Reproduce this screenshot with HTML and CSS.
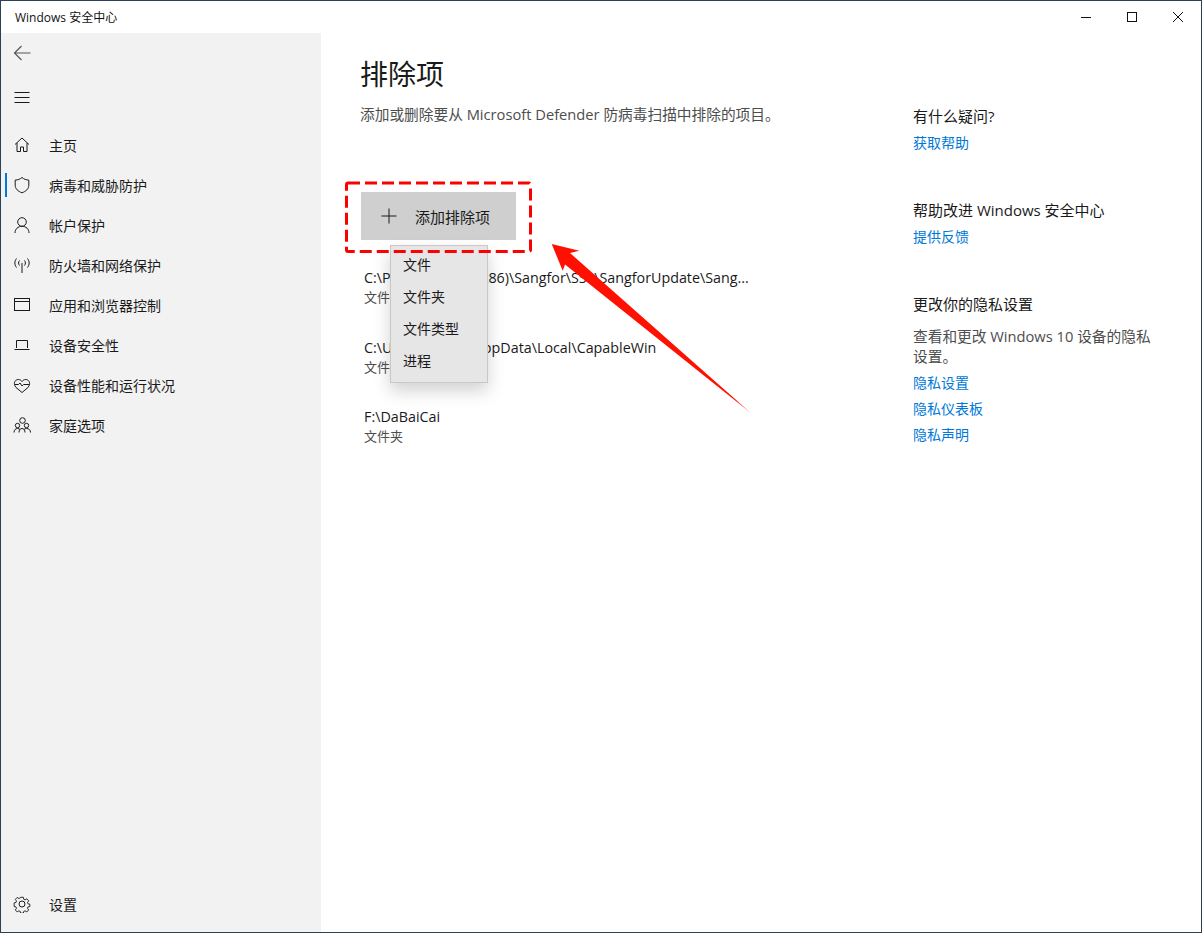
FILE: index.html
```html
<!DOCTYPE html>
<html lang="zh-CN">
<head>
<meta charset="utf-8">
<title>Windows 安全中心</title>
<link rel="stylesheet" href="styles.css">
</head>
<body>
<div class="window">
  <header class="titlebar">
    <span class="app-title">Windows 安全中心</span>
    <div class="caption">
      <span class="cap-btn"><svg width="12" height="12" viewBox="0 0 12 12"><path d="M1 6.5h10" class="cap-line"/></svg></span>
      <span class="cap-btn"><svg width="12" height="12" viewBox="0 0 12 12"><rect x="1.5" y="1.5" width="9" height="9" class="cap-line"/></svg></span>
      <span class="cap-btn"><svg width="12" height="12" viewBox="0 0 12 12"><path d="M1 1l10 10M11 1L1 11" class="cap-line"/></svg></span>
    </div>
  </header>
  <div class="body">
    <aside class="sidebar">
      <div class="tool-btn back">
        <svg width="18" height="18" viewBox="0 0 18 18" class="ico-grey"><path d="M1.5 9h16M8.5 2L1.5 9l7 7"/></svg>
      </div>
      <div class="tool-btn burger">
        <svg width="18" height="18" viewBox="0 0 18 18" class="ico"><path d="M1.5 4.5h15M1.5 9.5h15M1.500 14.500h15"/></svg>
      </div>
      <nav class="nav">
        <a class="nav-item"><svg class="ico" width="18" height="18" viewBox="0 0 18 18"><path d="M2 8.500L9 2l7 6.500M4 7v8.500h3.500V11h3v4.500H14V7"/></svg><span>主页</span></a>
        <a class="nav-item active"><svg class="ico" width="18" height="18" viewBox="0 0 18 18"><path d="M9 1.500c2 1.700 4.200 2.500 6.800 2.600v5c0 3.800-2.800 6.200-6.800 7.700-4-1.500-6.800-3.900-6.800-7.700v-5C4.800 4 7 3.200 9 1.500z"/></svg><span>病毒和威胁防护</span></a>
        <a class="nav-item"><svg class="ico" width="18" height="18" viewBox="0 0 18 18"><circle cx="9" cy="6" r="4.300"/><path d="M2 17c0-4 3-6.700 7-6.700s7 2.700 7 6.700"/></svg><span>帐户保护</span></a>
        <a class="nav-item"><svg class="ico" width="18" height="18" viewBox="0 0 18 18"><path d="M9 7v10M6.500 4.500c-1.200 1.500-1.200 3.500 0 5M11.500 4.500c1.200 1.500 1.200 3.500 0 5M3.500 2.500c-2.200 3-2.200 6 0 9M14.500 2.500c2.200 3 2.200 6 0 9"/></svg><span>防火墙和网络保护</span></a>
        <a class="nav-item"><svg class="ico" width="18" height="18" viewBox="0 0 18 18"><rect x="1.500" y="2.500" width="15" height="12"/><path d="M1.500 5.500h15"/></svg><span>应用和浏览器控制</span></a>
        <a class="nav-item"><svg class="ico" width="18" height="18" viewBox="0 0 18 18"><path d="M3.500 12V4.500h11V12M1.500 13.500h15"/></svg><span>设备安全性</span></a>
        <a class="nav-item"><svg class="ico" width="18" height="18" viewBox="0 0 18 18"><path d="M3 11.500L1.800 9.500C.5 6.500 2.500 3.500 5.200 3.500c1.700 0 3 .8 3.800 2 .8-1.200 2.100-2 3.800-2 2.700 0 4.700 3 3.400 6l-1.200 2L9 16.500z"/><path d="M1.500 8.500h4l1.500-1.500 2 3 1.500-1.500h6"/></svg><span>设备性能和运行状况</span></a>
        <a class="nav-item"><svg class="ico" width="18" height="18" viewBox="0 0 18 18"><circle cx="9.500" cy="4.500" r="2.800"/><circle cx="4.500" cy="9.500" r="2.200"/><circle cx="13.500" cy="9.500" r="2.200"/><path d="M1 16.500c0-2.500 1.500-4 3.500-4 1.200 0 2 .4 2.700 1.200M17.500 16.500c0-2.500-1.500-4-4-4-1 0-2 .4-2.700 1.200M6 16.500c0-2.500 1.200-4 3-4s3 1.500 3 4"/></svg><span>家庭选项</span></a>
      </nav>
      <a class="nav-item settings"><svg class="ico" width="18" height="18" viewBox="0 0 18 18"><circle cx="9" cy="9" r="3"/><path d="M7.500 1.500h3l.4 2.200 1.500.7 2-1.200 2 2.200-1.300 1.900.6 1.500 2 .4v2.600l-2 .4-.6 1.500 1.300 1.900-2 2.200-2-1.200-1.500.7-.4 1.900h-3l-.4-1.900-1.500-.7-2 1.200-2-2.200 1.300-1.900-.6-1.500-2-.4V7.700l2-.4.600-1.500-1.300-1.900 2-2.200 2 1.200 1.500-.7z" transform="translate(.9 .9) scale(.9)"/></svg><span>设置</span></a>
    </aside>
    <main class="content">
      <section class="primary">
        <h1 class="page-title">排除项</h1>
        <p class="page-desc">添加或删除要从 Microsoft Defender 防病毒扫描中排除的项目。</p>
        <button class="add-btn"><svg class="ico-dark" width="16" height="16" viewBox="0 0 16 16"><path d="M8 .5v15M.5 8h15"/></svg><span>添加排除项</span></button>
        <ul class="excl-list">
          <li class="excl-item"><div class="excl-path">C:\Program Files (x86)\Sangfor\SSL\SangforUpdate\Sang...</div><div class="excl-type">文件夹</div></li>
          <li class="excl-item"><div class="excl-path">C:\Users\Admin\AppData\Local\CapableWin</div><div class="excl-type">文件夹</div></li>
          <li class="excl-item"><div class="excl-path">F:\DaBaiCai</div><div class="excl-type">文件夹</div></li>
        </ul>
      </section>
      <aside class="side-info">
        <div class="info-group first">
          <h2>有什么疑问?</h2>
          <a class="link">获取帮助</a>
        </div>
        <div class="info-group">
          <h2>帮助改进 Windows 安全中心</h2>
          <a class="link">提供反馈</a>
        </div>
        <div class="info-group">
          <h2>更改你的隐私设置</h2>
          <p>查看和更改 Windows 10 设备的隐私设置。</p>
          <a class="link">隐私设置</a>
          <a class="link">隐私仪表板</a>
          <a class="link">隐私声明</a>
        </div>
      </aside>
    </main>
  </div>
  <div class="menu">
    <div class="menu-item">文件</div>
    <div class="menu-item">文件夹</div>
    <div class="menu-item">文件类型</div>
    <div class="menu-item">进程</div>
  </div>
  <svg class="annotation" width="1202" height="933" viewBox="0 0 1202 933">
    <defs>
      <linearGradient id="tail" gradientUnits="userSpaceOnUse" x1="735" y1="400" x2="752" y2="414">
        <stop offset="0" stop-color="#ff1000"/>
        <stop offset="1" stop-color="#ff1000" stop-opacity=".35"/>
      </linearGradient>
    </defs>
    <rect x="346.500" y="183" width="184" height="68.500" rx="1.500" class="dash"/>
    <path d="M551.700 244L579.300 250.700 570 253 752 414 565 264.500 562.700 270.700z" fill="url(#tail)"/>
  </svg>
</div>
</body>
</html>
```

FILE: styles.css
```css
* { box-sizing: border-box; }
html, body { margin: 0; height: 100%; }
body {
  width: 1202px;
  height: 933px;
  overflow: hidden;
  font-family: "Open Sans", "Noto Sans CJK SC", sans-serif;
  color: #1a1a1a;
  background: #fff;
}
.window {
  position: relative;
  width: 1202px;
  height: 933px;
  display: flex;
  flex-direction: column;
  border: 1px solid #2b4157;
  background: #fff;
  overflow: hidden;
}
.titlebar {
  flex: 0 0 32px;
  display: flex;
  align-items: center;
  justify-content: space-between;
  background: #fff;
}
.app-title { font-size: 12px; padding-left: 14px; color: #111; }
.caption { display: flex; }
.cap-btn {
  width: 46px;
  height: 32px;
  display: flex;
  align-items: center;
  justify-content: center;
}
.cap-line { fill: none; stroke: #111; stroke-width: 1; }
.body { flex: 1; display: flex; min-height: 0; }
.sidebar {
  width: 320px;
  background: #f2f2f2;
  display: flex;
  flex-direction: column;
  padding-top: 11px;
}
.ico, .ico-grey, .ico-dark {
  fill: none;
  stroke: #1a1a1a;
  stroke-width: 1;
  flex: none;
}
.ico-grey { stroke: #555; stroke-width: 1.200; }
.tool-btn {
  height: 18px;
  padding-left: 12px;
  display: flex;
  align-items: center;
}
.burger { margin-top: 26px; }
.nav { margin-top: 19px; flex: 1; }
.nav-item {
  position: relative;
  height: 40px;
  display: flex;
  align-items: center;
  gap: 18px;
  padding-left: 12px;
  font-size: 14px;
  color: #1a1a1a;
}
.nav-item span { position: relative; top: -.5px; }
.nav-item.active::before {
  content: "";
  position: absolute;
  left: 4px;
  top: 8px;
  width: 2px;
  height: 24px;
  background: #0078d7;
}
.settings { margin-bottom: 8px; }
.content { flex: 1; display: flex; background: #fff; }
.primary { width: 552px; flex: none; padding-left: 40px; }
.page-title {
  margin: 21px 0 0 -1px;
  font-size: 28px;
  font-weight: 400;
  line-height: 40px;
  color: #1a1a1a;
}
.page-desc {
  margin: 10px 0 0 -1px;
  font-size: 14.700px;
  line-height: 20px;
  color: #4d4d4d;
  white-space: nowrap;
}
.add-btn {
  margin-top: 68px;
  width: 155px;
  height: 48px;
  border: 0;
  background: #cfcfcf;
  display: flex;
  align-items: center;
  gap: 18px;
  padding: 0 0 0 20px;
  font: inherit;
  font-size: 15px;
  color: #1a1a1a;
}
.excl-list { list-style: none; margin: 28px 0 0; padding: 0 0 0 3px; }
.excl-item { height: 69.500px; }
.excl-path { font-size: 14.300px; line-height: 20px; color: #1a1a1a; white-space: nowrap; }
.excl-type { font-size: 13px; line-height: 19px; color: #4d4d4d; }
.side-info { flex: 1; padding: 69px 45px 0 40px; }
.info-group { margin-bottom: 40px; }
.info-group h2 {
  margin: 0;
  font-size: 15px;
  font-weight: 400;
  line-height: 28px;
  color: #1a1a1a;
}
.info-group p {
  margin: 8px 0 4px;
  font-size: 14.700px;
  line-height: 20px;
  color: #4d4d4d;
}
.link {
  display: block;
  font-size: 14px;
  line-height: 26px;
  color: #0078d7;
}
.menu {
  position: absolute;
  left: 389px;
  top: 244px;
  width: 98px;
  height: 138px;
  padding: 3px 0;
  background: #e6e6e6;
  border: 1px solid #c8c8c8;
  box-shadow: 0 8px 16px rgba(0, 0, 0, .18);
}
.menu-item {
  height: 32px;
  line-height: 32px;
  padding-left: 12px;
  font-size: 14px;
  color: #1a1a1a;
}
.annotation { position: absolute; left: -1px; top: -1px; pointer-events: none; }
.dash {
  fill: none;
  stroke: #ff0000;
  stroke-width: 3;
  stroke-dasharray: 12 5;
}
```
